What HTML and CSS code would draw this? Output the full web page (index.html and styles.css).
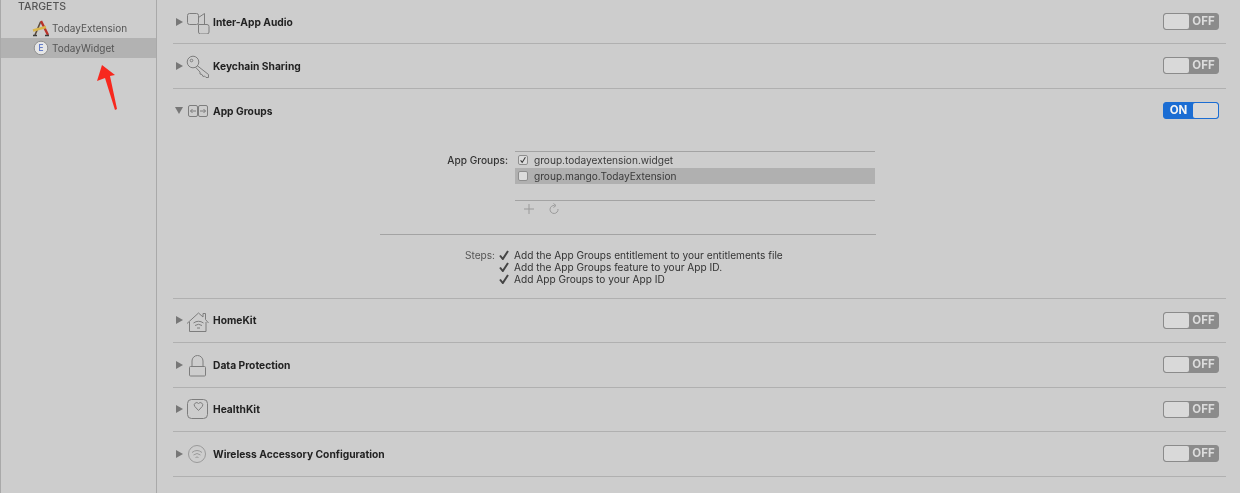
FILE: index.html
```html
<!DOCTYPE html>
<html lang="en">
<head>
    <meta charset="UTF-8">
    <meta name="viewport" content="width=device-width, initial-scale=1.0">
    <title>Capabilities</title>
    <link rel="stylesheet" href="styles.css">
</head>
<body>

    <aside class="sidebar">
        <div class="sidebar-title">TARGETS</div>
        <div class="target">
            <svg class="target-icon" viewBox="0 0 18 18">
                <path d="M3 16 8.500 3" fill="none" stroke="#5b4a3a" stroke-width="1.600"/>
                <path d="M9 2 16 16" fill="none" stroke="#b8322a" stroke-width="2.400"/>
                <path d="M1 11.500 14 8" stroke="#d9b64c" stroke-width="2.400"/>
                <path d="M1 16.500h4M13 16.500h4" stroke="#3d3d3d" stroke-width="1.400"/>
            </svg>
            <span>TodayExtension</span>
        </div>
        <div class="target selected">
            <svg class="target-icon" viewBox="0 0 18 18">
                <circle cx="9" cy="9" r="6.800" fill="#e6e6e6" stroke="#8f8f8f"/>
                <text x="9" y="12" class="target-letter">E</text>
            </svg>
            <span>TodayWidget</span>
        </div>
    </aside>

    <svg class="red-arrow" viewBox="0 0 24 50">
        <path d="M7 1 2 17 10 14 20 46 22 45 15 12 20 11Z" fill="#f7281e"/>
    </svg>

    <main class="content">

        <section class="row first">
            <span class="tri"></span>
            <svg class="cap-icon" viewBox="0 0 24 24">
                <rect x="1.500" y="3.500" width="11" height="11" rx="2"/>
                <path d="M12.500 7.500 18.500 3.500V14.500"/>
                <path d="M12.500 14.500V22a2 2 0 0 0 2 2H21a2 2 0 0 0 2-2V16.500a2 2 0 0 0-2-2H12.500"/>
            </svg>
            <span class="cap-name">Inter-App Audio</span>
            <div class="switch off"><span class="knob"></span><span class="state">OFF</span></div>
        </section>

        <section class="row">
            <span class="tri"></span>
            <svg class="cap-icon" viewBox="0 0 24 24">
                <circle cx="7" cy="8" r="5.800"/>
                <circle cx="5.500" cy="6.500" r="1.300"/>
                <path d="M11 11.500 22.500 20.500V23.500H20L18.500 22 17 22.500 16 20.500 14 20V18L9.500 13.200"/>
            </svg>
            <span class="cap-name">Keychain Sharing</span>
            <div class="switch off"><span class="knob"></span><span class="state">OFF</span></div>
        </section>

        <section class="row open">
            <div class="row-head">
                <span class="tri down"></span>
                <svg class="cap-icon" viewBox="0 0 24 24">
                    <rect x="2.500" y="6.500" width="9" height="11" rx="1.500"/>
                    <rect x="12.500" y="6.500" width="9" height="11" rx="1.500"/>
                    <path d="M4.500 12H10M4.500 12l2-2M4.500 12l2 2M14 12h5.500M19.500 12l-2-2M19.500 12l-2 2"/>
                </svg>
                <span class="cap-name">App Groups</span>
                <div class="switch on"><span class="state">ON</span><span class="knob"></span></div>
            </div>

            <div class="groups">
                <div class="groups-label">App Groups:</div>
                <div class="groups-box">
                    <ul class="groups-list">
                        <li class="group-item">
                            <span class="checkbox">
                                <svg viewBox="0 0 10 10"><path d="M2 5.500 4 8 8 1.500"/></svg>
                            </span>
                            group.todayextension.widget
                        </li>
                        <li class="group-item selected">
                            <span class="checkbox"></span>
                            group.mango.TodayExtension
                        </li>
                    </ul>
                    <div class="groups-tools">
                        <svg class="tool" viewBox="0 0 12 12"><path d="M6 1v10M1 6h10"/></svg>
                        <svg class="tool" viewBox="0 0 12 12"><path d="M6.500 2.500A4 4 0 1 0 10 6"/><path d="M5.500 .5 8 2.500 5.500 4.500"/></svg>
                    </div>
                </div>
            </div>

            <div class="groups-rule"></div>

            <div class="steps">
                <div class="steps-label">Steps:</div>
                <ul class="steps-list">
                    <li class="step"><svg class="tick" viewBox="0 0 10 10"><path d="M1 5.500 3.800 9 9 1"/></svg>Add the App Groups entitlement to your entitlements file</li>
                    <li class="step"><svg class="tick" viewBox="0 0 10 10"><path d="M1 5.500 3.800 9 9 1"/></svg>Add the App Groups feature to your App ID.</li>
                    <li class="step"><svg class="tick" viewBox="0 0 10 10"><path d="M1 5.500 3.800 9 9 1"/></svg>Add App Groups to your App ID</li>
                </ul>
            </div>
        </section>

        <section class="row">
            <span class="tri"></span>
            <svg class="cap-icon" viewBox="0 0 24 24">
                <path d="M1 15.500 12.500 5 17 9V5.500H19.500V11.500L22.500 15"/>
                <path d="M3.500 14V23.500H20V14"/>
                <path d="M7.500 15q5-3.500 10 0M9 17.500q3.500-2.500 7 0M11 20h3"/>
            </svg>
            <span class="cap-name">HomeKit</span>
            <div class="switch off"><span class="knob"></span><span class="state">OFF</span></div>
        </section>

        <section class="row">
            <span class="tri"></span>
            <svg class="cap-icon" viewBox="0 0 24 24">
                <path d="M6 13.500V8a5.500 5.500 0 0 1 11 0v5.500"/>
                <rect x="3.500" y="13.500" width="16" height="9.500" rx="1"/>
            </svg>
            <span class="cap-name">Data Protection</span>
            <div class="switch off"><span class="knob"></span><span class="state">OFF</span></div>
        </section>

        <section class="row">
            <span class="tri"></span>
            <svg class="cap-icon" viewBox="0 0 24 24">
                <rect x="1.500" y="2.500" width="20" height="19" rx="4"/>
                <path d="M12.500 13.500 8.800 9.500a2.300 2.300 0 0 1 3.700-3 2.300 2.300 0 0 1 3.700 3Z"/>
            </svg>
            <span class="cap-name">HealthKit</span>
            <div class="switch off"><span class="knob"></span><span class="state">OFF</span></div>
        </section>

        <section class="row">
            <span class="tri"></span>
            <svg class="cap-icon light" viewBox="0 0 24 24">
                <circle cx="11" cy="12" r="8.500"/>
                <path d="M6 10.500q5-4 10 0M7.500 13q3.500-3 7 0M9.500 15.500q1.500-1 3 0"/>
            </svg>
            <span class="cap-name">Wireless Accessory Configuration</span>
            <div class="switch off"><span class="knob"></span><span class="state">OFF</span></div>
        </section>

    </main>

</body>
</html>
```

FILE: styles.css
```css
* {
    box-sizing: border-box;
    margin: 0;
    padding: 0;
}

html, body {
    height: 100%;
    overflow: hidden;
}

body {
    background: #cdcdcd;
    display: flex;
    font-family: "Inter", "Liberation Sans", sans-serif;
    font-size: 10.15px;
    color: #333;
    filter: blur(0.4px);
}

ul {
    list-style: none;
}

.sidebar {
    width: 157px;
    flex-shrink: 0;
    border-left: 1px solid #a9a9a9;
    border-right: 1px solid #a9a9a9;
}

.sidebar-title {
    height: 18px;
    padding: 1px 0 0 17px;
    line-height: 12px;
    font-weight: 500;
    font-size: 10.5px;
    color: #555;
}

.target {
    height: 20px;
    display: flex;
    align-items: center;
    gap: 2px;
    padding-left: 31px;
    font-size: 10px;
    color: #555;
}

.target.selected {
    background: #b2b2b2;
}

.target-icon {
    width: 18px;
    height: 18px;
}

.target-letter {
    font-size: 8.5px;
    text-anchor: middle;
    fill: #3e5fc0;
}

.red-arrow {
    position: absolute;
    left: 95px;
    top: 64px;
    width: 24px;
    height: 50px;
}

.content {
    flex: 1;
    padding: 0 14px 0 16px;
}

.row, .row-head {
    display: flex;
    align-items: center;
}

.row {
    height: 44.5px;
    border-bottom: 1px solid #b0b0b0;
}

.row.first {
    height: 44px;
}

.row.open {
    display: block;
    height: 210px;
}

.row-head {
    height: 44.5px;
}

.tri {
    width: 0;
    height: 0;
    margin: 0 3px 0 3px;
    border-left: 7px solid #777;
    border-top: 4px solid transparent;
    border-bottom: 4px solid transparent;
}

.tri.down {
    margin: 0 3px 0 2px;
    border-left: 4px solid transparent;
    border-right: 4px solid transparent;
    border-top: 7px solid #777;
    border-bottom: 0;
}

.cap-icon {
    width: 24px;
    height: 24px;
    margin-right: 3px;
    fill: none;
    stroke: #7d7d7d;
    stroke-width: 1;
}

.cap-icon.light {
    stroke: #999;
}

.cap-name {
    flex: 1;
    font-size: 10.25px;
    font-weight: 700;
    color: #222;
}

.switch {
    width: 56px;
    height: 17px;
    margin-right: 7px;
    display: flex;
    border-radius: 3px;
    font-size: 11.5px;
    font-weight: 700;
    overflow: hidden;
}

.switch.off {
    background: #8b8b8b;
    border: 1px solid #8b8b8b;
}

.switch.on {
    background: #1b6dd3;
    border: 1px solid #1b6dd3;
}

.knob {
    width: 25px;
    background: #d9d9d9;
    border-radius: 2px;
}

.state {
    flex: 1;
    line-height: 15px;
    text-align: center;
    color: #dcdcdc;
}

.switch.on .state {
    color: #f4f4f4;
}

.groups {
    display: flex;
    gap: 7px;
    margin-top: 18px;
}

.groups-label {
    width: 335px;
    padding-top: 3px;
    text-align: right;
    font-weight: 500;
    color: #333;
}

.groups-box {
    width: 360px;
}

.groups-list {
    height: 50px;
    border-top: 1px solid #a3a3a3;
    border-bottom: 1px solid #a3a3a3;
}

.group-item {
    height: 16px;
    display: flex;
    align-items: center;
    gap: 6px;
    padding-left: 3px;
    color: #3a3a3a;
}

.group-item.selected {
    background: #b0b0b0;
}

.checkbox {
    width: 10px;
    height: 10px;
    border: 1px solid #8d8d8d;
    border-radius: 2px;
    background: #dcdcdc;
    display: flex;
}

.checkbox svg {
    fill: none;
    stroke: #333;
    stroke-width: 1.3;
}

.groups-tools {
    height: 33px;
    display: flex;
    gap: 13px;
    padding: 2px 0 0 8px;
}

.tool {
    width: 12px;
    height: 12px;
    fill: none;
    stroke: #999;
    stroke-width: 1;
}

.groups-rule {
    width: 496px;
    margin-left: 207px;
    border-top: 1px solid #a3a3a3;
}

.steps {
    display: flex;
    margin-top: 14px;
    gap: 4px;
}

.steps-label {
    width: 322px;
    text-align: right;
    color: #555;
}

.step {
    height: 12px;
    line-height: 12px;
    display: flex;
    align-items: center;
    gap: 5px;
    color: #333;
}

.tick {
    width: 10px;
    height: 10px;
    fill: none;
    stroke: #444;
    stroke-width: 2;
}
```
